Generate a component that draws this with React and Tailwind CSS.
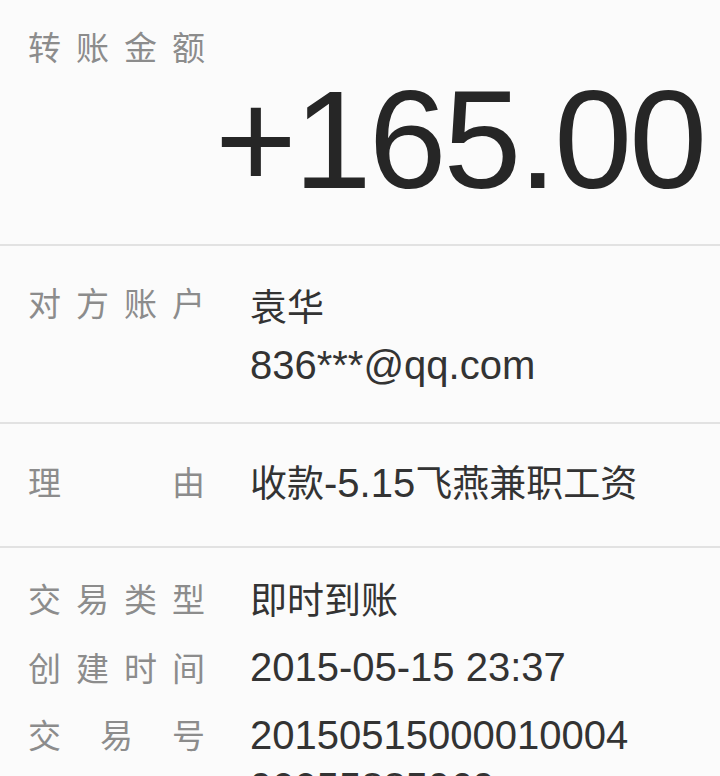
import React from 'react';

const LATIN = "font-['Liberation_Sans','Noto_Sans_CJK_SC',sans-serif]";
const CJK = "font-['Noto_Sans_CJK_SC',sans-serif]";

// spread label characters across a fixed width, like the bank app does
const Label = ({ text, lh = 'leading-[58px]' }) => (
  <div className={`w-[177px] shrink-0 flex justify-between text-[33px] text-[#8c8c8c] ${lh} ${CJK}`}>
    {text.split('').map((ch, i) => (
      <span key={i}>{ch}</span>
    ))}
  </div>
);

const Zh = ({ children }) => <span className={`text-[37px] ${CJK}`}>{children}</span>;

const App = () => {
  return (
    <div className="w-[720px] h-[776px] overflow-hidden bg-[#fbfbfb]">
      {/* amount */}
      <div className="pt-[30px] pb-[34px] pl-[28px] pr-[16px] border-b-2 border-[#e2e2e2]">
        <Label text="转账金额" lh="leading-[33px]" />
        <div className={`mt-[7px] text-right text-[140px] leading-[140px] tracking-[-3px] text-[#262626] ${LATIN}`}>
          +165.00
        </div>
      </div>

      {/* counterpart */}
      <div className="pt-[30px] pb-[28px] pl-[28px] flex gap-[45px] border-b-2 border-[#e2e2e2]">
        <div className="-mt-[3px]">
          <Label text="对方账户" />
        </div>
        <div className={`text-[40px] leading-[58px] text-[#333333] ${LATIN}`}>
          <div><Zh>袁华</Zh></div>
          <div>836***@qq.com</div>
        </div>
      </div>

      {/* reason */}
      <div className="pt-[28px] pb-[34px] pl-[28px] flex gap-[45px] border-b-2 border-[#e2e2e2]">
        <Label text="理由" />
        <div className={`text-[40px] leading-[58px] text-[#333333] whitespace-nowrap ${LATIN}`}>
          <Zh>收款</Zh>-5.15<Zh>飞燕兼职工资</Zh>
        </div>
      </div>

      {/* details */}
      <div className="pt-[25px] pl-[28px] flex flex-col gap-[17px]">
        <div className="flex gap-[45px]">
          <Label text="交易类型" lh="leading-[50px]" />
          <div className={`text-[40px] leading-[50px] text-[#333333] ${LATIN}`}>
            <Zh>即时到账</Zh>
          </div>
        </div>
        <div className="flex gap-[45px]">
          <Label text="创建时间" lh="leading-[50px]" />
          <div className={`text-[40px] leading-[50px] text-[#333333] whitespace-nowrap ${LATIN}`}>
            2015-05-15 23:37
          </div>
        </div>
        <div className="flex gap-[45px]">
          <Label text="交易号" lh="leading-[50px]" />
          <div className={`w-[390px] break-all text-[40px] leading-[52px] text-[#333333] ${LATIN}`}>
            2015051500001000490055885969
          </div>
        </div>
      </div>
    </div>
  );
};

export default App;
